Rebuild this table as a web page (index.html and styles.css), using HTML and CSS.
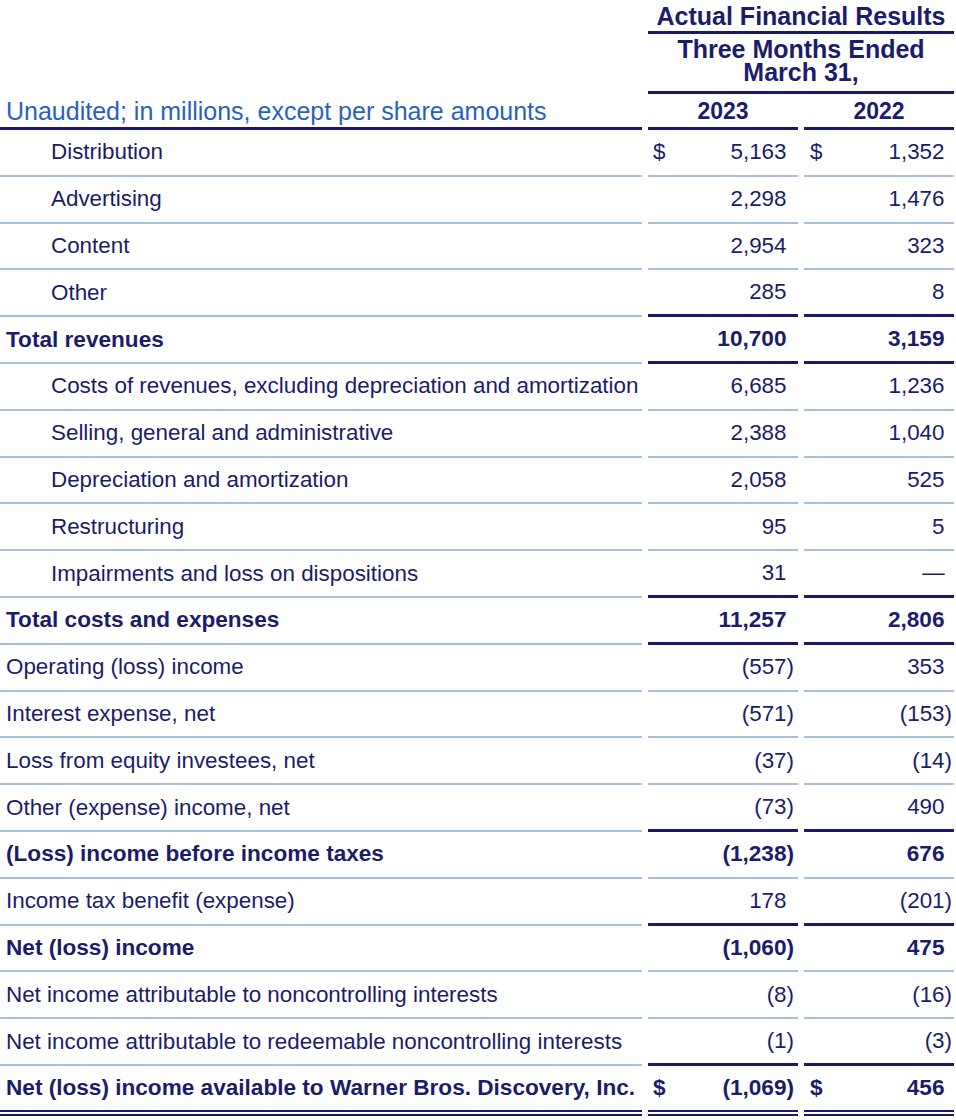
FILE: index.html
```html
<!DOCTYPE html>
<html>
<head>
<meta charset="utf-8">
<link rel="stylesheet" href="styles.css">
</head>
<body>
<div class="sheet">
  <div class="hrow h1">
    <div class="hcell span">Actual Financial Results</div>
  </div>
  <div class="hrow h2">
    <div class="hcell span">Three Months Ended<br>March 31,</div>
  </div>
  <div class="hrow h3">
    <div class="hcell unaudited">Unaudited; in millions, except per share amounts</div>
    <div class="hcell year c2">2023</div>
    <div class="hcell year c3">2022</div>
  </div>

  <div class="row">
    <div class="lab ind">Distribution</div>
    <div class="val c2"><span class="cur">$</span><span class="num">5,163<span class="p">)</span></span></div>
    <div class="val c3"><span class="cur">$</span><span class="num">1,352<span class="p">)</span></span></div>
  </div>
  <div class="row">
    <div class="lab ind">Advertising</div>
    <div class="val c2"><span class="num">2,298<span class="p">)</span></span></div>
    <div class="val c3"><span class="num">1,476<span class="p">)</span></span></div>
  </div>
  <div class="row">
    <div class="lab ind">Content</div>
    <div class="val c2"><span class="num">2,954<span class="p">)</span></span></div>
    <div class="val c3"><span class="num">323<span class="p">)</span></span></div>
  </div>
  <div class="row thick">
    <div class="lab ind">Other</div>
    <div class="val c2"><span class="num">285<span class="p">)</span></span></div>
    <div class="val c3"><span class="num">8<span class="p">)</span></span></div>
  </div>
  <div class="row bold thick">
    <div class="lab">Total revenues</div>
    <div class="val c2"><span class="num">10,700<span class="p">)</span></span></div>
    <div class="val c3"><span class="num">3,159<span class="p">)</span></span></div>
  </div>
  <div class="row">
    <div class="lab ind">Costs of revenues, excluding depreciation and amortization</div>
    <div class="val c2"><span class="num">6,685<span class="p">)</span></span></div>
    <div class="val c3"><span class="num">1,236<span class="p">)</span></span></div>
  </div>
  <div class="row">
    <div class="lab ind">Selling, general and administrative</div>
    <div class="val c2"><span class="num">2,388<span class="p">)</span></span></div>
    <div class="val c3"><span class="num">1,040<span class="p">)</span></span></div>
  </div>
  <div class="row">
    <div class="lab ind">Depreciation and amortization</div>
    <div class="val c2"><span class="num">2,058<span class="p">)</span></span></div>
    <div class="val c3"><span class="num">525<span class="p">)</span></span></div>
  </div>
  <div class="row">
    <div class="lab ind">Restructuring</div>
    <div class="val c2"><span class="num">95<span class="p">)</span></span></div>
    <div class="val c3"><span class="num">5<span class="p">)</span></span></div>
  </div>
  <div class="row thick">
    <div class="lab ind">Impairments and loss on dispositions</div>
    <div class="val c2"><span class="num">31<span class="p">)</span></span></div>
    <div class="val c3"><span class="num">—<span class="p">)</span></span></div>
  </div>
  <div class="row bold thick">
    <div class="lab">Total costs and expenses</div>
    <div class="val c2"><span class="num">11,257<span class="p">)</span></span></div>
    <div class="val c3"><span class="num">2,806<span class="p">)</span></span></div>
  </div>
  <div class="row">
    <div class="lab">Operating (loss) income</div>
    <div class="val c2"><span class="num">(557)</span></div>
    <div class="val c3"><span class="num">353<span class="p">)</span></span></div>
  </div>
  <div class="row">
    <div class="lab">Interest expense, net</div>
    <div class="val c2"><span class="num">(571)</span></div>
    <div class="val c3"><span class="num">(153)</span></div>
  </div>
  <div class="row">
    <div class="lab">Loss from equity investees, net</div>
    <div class="val c2"><span class="num">(37)</span></div>
    <div class="val c3"><span class="num">(14)</span></div>
  </div>
  <div class="row thick">
    <div class="lab">Other (expense) income, net</div>
    <div class="val c2"><span class="num">(73)</span></div>
    <div class="val c3"><span class="num">490<span class="p">)</span></span></div>
  </div>
  <div class="row bold">
    <div class="lab">(Loss) income before income taxes</div>
    <div class="val c2"><span class="num">(1,238)</span></div>
    <div class="val c3"><span class="num">676<span class="p">)</span></span></div>
  </div>
  <div class="row thick">
    <div class="lab">Income tax benefit (expense)</div>
    <div class="val c2"><span class="num">178<span class="p">)</span></span></div>
    <div class="val c3"><span class="num">(201)</span></div>
  </div>
  <div class="row bold">
    <div class="lab">Net (loss) income</div>
    <div class="val c2"><span class="num">(1,060)</span></div>
    <div class="val c3"><span class="num">475<span class="p">)</span></span></div>
  </div>
  <div class="row">
    <div class="lab">Net income attributable to noncontrolling interests</div>
    <div class="val c2"><span class="num">(8)</span></div>
    <div class="val c3"><span class="num">(16)</span></div>
  </div>
  <div class="row thick">
    <div class="lab">Net income attributable to redeemable noncontrolling interests</div>
    <div class="val c2"><span class="num">(1)</span></div>
    <div class="val c3"><span class="num">(3)</span></div>
  </div>
  <div class="row bold final">
    <div class="lab">Net (loss) income available to Warner Bros. Discovery, Inc.</div>
    <div class="val c2"><span class="cur">$</span><span class="num">(1,069)</span></div>
    <div class="val c3"><span class="cur">$</span><span class="num">456<span class="p">)</span></span></div>
  </div>
</div>
</body>
</html>
```

FILE: styles.css
```css
html, body {
  margin: 0;
  padding: 0;
  background: #ffffff;
}

body {
  font-family: "Liberation Sans", Arial, sans-serif;
  color: #1c1c6a;
}

.sheet {
  width: 954px;
}

.hrow,
.row {
  display: grid;
  grid-template-columns: 642px 150px 150px;
  column-gap: 6px;
}

.hcell {
  box-sizing: border-box;
  font-weight: bold;
  font-size: 25px;
  line-height: 26px;
  display: flex;
  white-space: nowrap;
}

.span {
  grid-column: 2 / 4;
  justify-content: center;
  text-align: center;
  border-bottom: 3px solid #1a1a6c;
}

.h1 .span {
  height: 34px;
  align-items: center;
}

.h2 .span {
  height: 60px;
  line-height: 23px;
  align-items: flex-start;
  padding-top: 4px;
}

.h3 .hcell {
  height: 36px;
  align-items: center;
  border-bottom: 3px solid #1a1a6c;
}

.unaudited {
  font-weight: normal;
  font-size: 25px;
  color: #2a5fc2;
  padding-left: 6px;
}

.year {
  justify-content: center;
  font-size: 23px;
}

.row {
  height: 46.8px;
  font-size: 22.4px;
  line-height: 24px;
}

.row > div {
  box-sizing: border-box;
  display: flex;
  align-items: center;
  white-space: nowrap;
  border-bottom: 2px solid #a9c0dc;
}

.lab {
  padding-left: 6px;
}

.lab.ind {
  padding-left: 51px;
}

.val {
  padding-left: 5px;
}

.val.c2 {
  padding-right: 4px;
}

.val.c3 {
  padding-left: 6px;
  padding-right: 2px;
}

.num {
  margin-left: auto;
}

.p {
  visibility: hidden;
}

.bold {
  font-weight: bold;
  font-size: 22.6px;
}

.row.thick > .val {
  border-bottom: 3px solid #1a1a6c;
}

.row.final {
  height: 50px;
}

.row.final > div {
  border-bottom: 6px double #1a1a6c;
}
```
